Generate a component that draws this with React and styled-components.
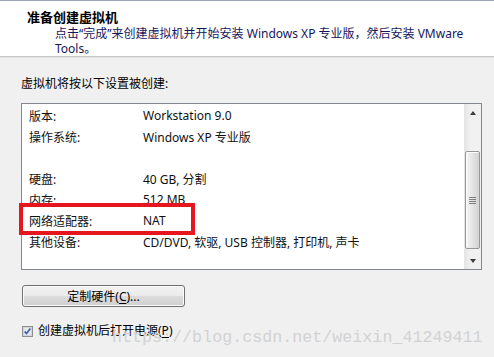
import React from 'react'
import styled, { createGlobalStyle } from 'styled-components'

const GlobalStyle = createGlobalStyle`
    html, body {
        margin: 0;
        padding: 0;
        background: #f0f0f0;
    }

    body {
        font-family: "Noto Sans", "Noto Sans CJK SC", sans-serif;
        font-size: 12px;
        color: #000;
    }
`

const Dialog = styled.div`
    position: relative;
    width: 494px;
    height: 357px;
    overflow: hidden;
    background: #f0f0f0;
`

const Header = styled.div`
    box-sizing: border-box;
    height: 57px;
    padding: 8px 20px 0 27px;
    background: #fff;
    border-top: 1px solid #9aa6b6;
    border-bottom: 1px solid #c8c8c8;
    box-shadow: 0 1px 0 #e2e2e2;
`

const Title = styled.div`
    font-family: "Noto Sans CJK SC", sans-serif;
    font-weight: bold;
    font-size: 13px;
    line-height: 16px;
`

const Subtitle = styled.div`
    margin: 1px 0 0 28px;
    line-height: 15px;
    color: #16165c;
`

const Body = styled.div`
    padding: 19px 12px 0 21px;
`

const Intro = styled.div`
    line-height: 16px;
`

const ListBox = styled.div`
    display: flex;
    box-sizing: border-box;
    height: 167px;
    margin-top: 11px;
    background: #fff;
    border: 1px solid #828790;
`

const Rows = styled.div`
    flex: 1;
    padding-top: 1px;
`

const Row = styled.div`
    position: relative;
    display: grid;
    grid-template-columns: 114px 1fr;
    align-items: center;
    height: 21px;
    padding-left: 7px;
    color: #111;
`

const Highlight = styled.div`
    position: absolute;
    left: -3px;
    top: -7px;
    width: 176px;
    height: 32px;
    box-sizing: border-box;
    border: 4px solid #e6161f;
    pointer-events: none;
`

const ScrollBar = styled.div`
    display: flex;
    flex-direction: column;
    width: 17px;
    background: linear-gradient(to right, #e4e4e4, #f1f1f1 40%, #f1f1f1);
`

const ArrowButton = styled.div`
    display: flex;
    align-items: center;
    justify-content: center;
    height: 17px;

    &::after {
        content: '';
        border-left: 3.5px solid transparent;
        border-right: 3.5px solid transparent;
        ${p => p.$down
            ? 'border-top: 4px solid #3c3c3c;'
            : 'border-bottom: 4px solid #3c3c3c;'}
    }
`

const Track = styled.div`
    flex: 1;
    padding-top: ${p => p.$offset}px;
`

const Thumb = styled.div`
    display: flex;
    align-items: center;
    justify-content: center;
    box-sizing: border-box;
    height: ${p => p.$size}px;
    margin: 0 1px;
    border: 1px solid #979797;
    border-radius: 2px;
    background: linear-gradient(to right, #f5f5f5, #e6e6e6 45%, #d2d2d2);
    box-shadow: inset 1px 1px 0 #fdfdfd;
`

const Grip = styled.div`
    width: 7px;
    height: 7px;
    background: repeating-linear-gradient(to bottom, #5e5e5e 0, #5e5e5e 1px, transparent 1px, transparent 2px);
    opacity: 0.75;
`

const Button = styled.button`
    display: block;
    box-sizing: border-box;
    width: 163px;
    height: 22px;
    margin: 15px 0 0 1px;
    padding: 0;
    font-family: inherit;
    font-size: 12px;
    color: #000;
    border: 1px solid #707070;
    border-radius: 3px;
    background: linear-gradient(#f2f2f2 0%, #ebebeb 50%, #dddddd 51%, #cfcfcf 100%);
    box-shadow: inset 0 0 0 1px #fbfbfb;

    u {
        text-decoration-thickness: 1px;
        text-underline-offset: 2px;
    }
`

const CheckRow = styled.label`
    display: flex;
    align-items: center;
    gap: 5px;
    margin: 16px 0 0 1px;
    line-height: 16px;

    u {
        text-decoration-thickness: 1px;
        text-underline-offset: 2px;
    }
`

const Watermark = styled.div`
    position: absolute;
    left: 112px;
    top: 328px;
    font-family: "Liberation Mono", monospace;
    font-size: 16.7px;
    line-height: 20px;
    color: #d2d2d2;
    white-space: nowrap;
    pointer-events: none;
`

const settings = [
    { label: '版本:', value: 'Workstation 9.0' },
    { label: '操作系统:', value: 'Windows XP 专业版' },
    { label: '', value: '' },
    { label: '硬盘:', value: '40 GB, 分割' },
    { label: '内存:', value: '512 MB' },
    { label: '网络适配器:', value: 'NAT', marked: true },
    { label: '其他设备:', value: 'CD/DVD, 软驱, USB 控制器, 打印机, 声卡' },
]

const CheckBox = () => (
    <svg width="11" height="11" viewBox="0 0 11 11">
        <rect x="0.5" y="0.5" width="10" height="10" fill="#f4f4f4" stroke="#8e8f8f" />
        <rect x="1.5" y="1.5" width="8" height="8" fill="#e4e8ee" stroke="#d2d6dc" />
        <path d="M2.6 5.4 L4.5 7.6 L8.4 2.6" fill="none" stroke="#3b5ba8" strokeWidth="1.6" />
    </svg>
)

export default function App() {
    return (
        <Dialog>
            <GlobalStyle />
            <Header>
                <Title>准备创建虚拟机</Title>
                <Subtitle>
                    点击“完成”来创建虚拟机并开始安装 Windows XP 专业版，然后安装 VMware<br />
                    Tools。
                </Subtitle>
            </Header>
            <Body>
                <Intro>虚拟机将按以下设置被创建:</Intro>
                <ListBox>
                    <Rows>
                        {settings.map((s, i) => (
                            <Row key={i}>
                                <span>{s.label}</span>
                                <span>{s.value}</span>
                                {s.marked && <Highlight />}
                            </Row>
                        ))}
                    </Rows>
                    <ScrollBar>
                        <ArrowButton />
                        <Track $offset={30}>
                            <Thumb $size={98}>
                                <Grip />
                            </Thumb>
                        </Track>
                        <ArrowButton $down />
                    </ScrollBar>
                </ListBox>
                <Button>定制硬件(<u>C</u>)...</Button>
                <CheckRow>
                    <CheckBox />
                    <span>创建虚拟机后打开电源(<u>P</u>)</span>
                </CheckRow>
            </Body>
            <Watermark>https://blog.csdn.net/weixin_41249411</Watermark>
        </Dialog>
    )
}
